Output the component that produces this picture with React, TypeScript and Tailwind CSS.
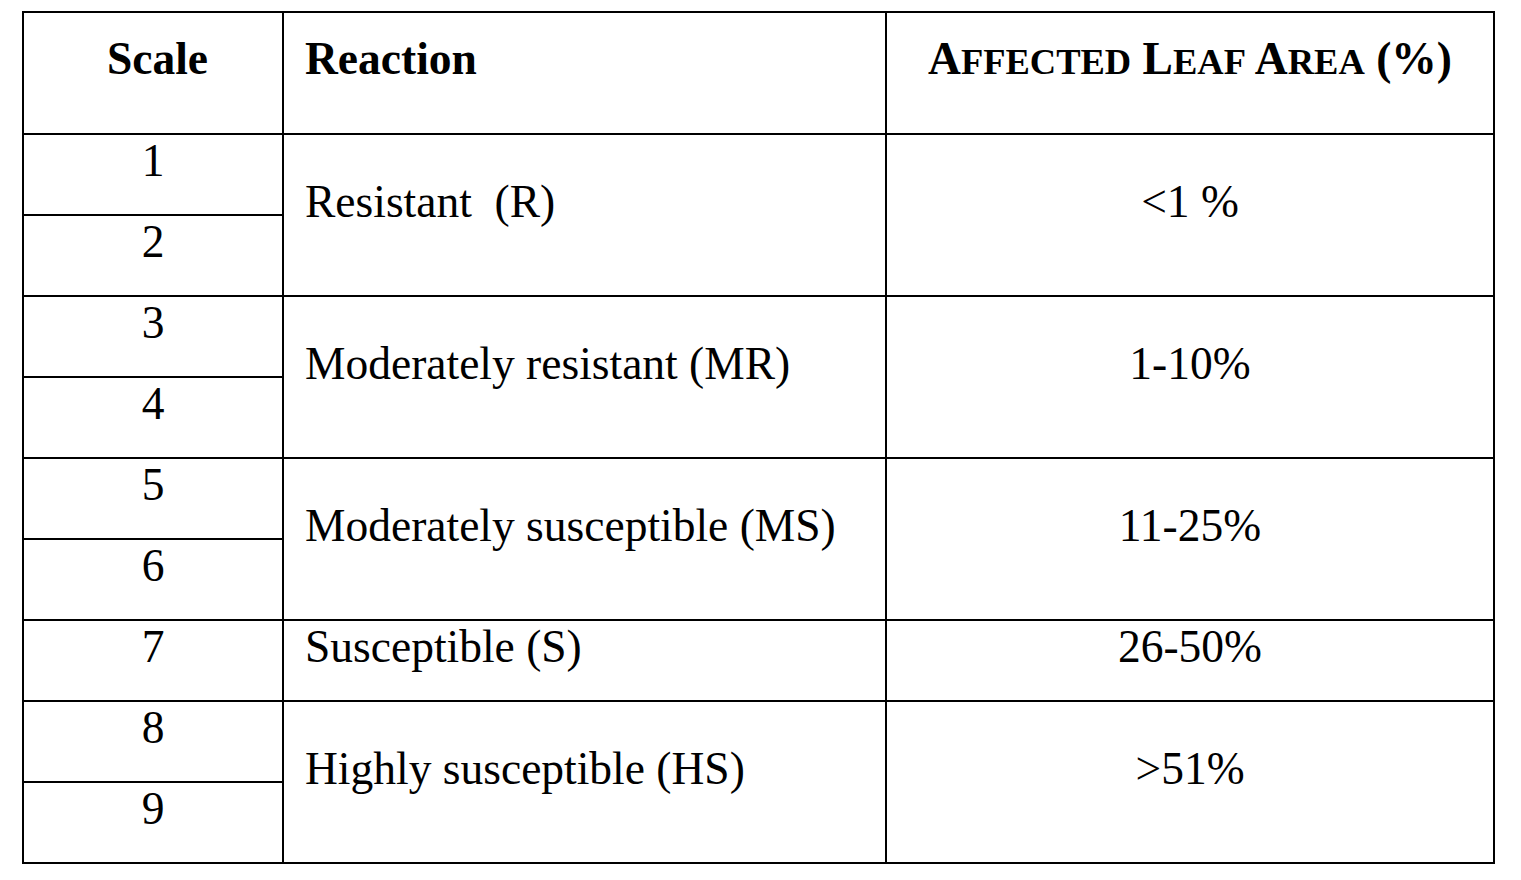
import React from "react";

const cell = "bg-white text-black";
const single = "pt-0";
const merged = "pt-[41px]";
const sc = "text-[36.5px]";

export default function App() {
  return (
    <div className="min-h-screen w-full bg-white pl-[22px] pt-[11px] font-['Liberation_Serif','Times_New_Roman',serif] text-[45.5px] leading-[52px] text-black">
      <div className="grid w-[1473px] grid-cols-[258px_601px_606px] grid-rows-[120px_repeat(9,79px)] gap-[2px] bg-black p-[2px]">
        {/* header */}
        <div className={`${cell} col-start-1 row-start-1 pt-[20px] pl-[9px] text-center font-bold`}>Scale</div>
        <div className={`${cell} col-start-2 row-start-1 pt-[20px] pl-[21px] font-bold`}>Reaction</div>
        <div className={`${cell} col-start-3 row-start-1 pt-[20px] text-center font-bold whitespace-nowrap`}>
          A<span className={sc}>FFECTED</span> L<span className={sc}>EAF</span> A<span className={sc}>REA</span> (%)
        </div>

        {/* scale column */}
        <div className={`${cell} ${single} col-start-1 row-start-2 text-center`}>1</div>
        <div className={`${cell} ${single} col-start-1 row-start-3 text-center`}>2</div>
        <div className={`${cell} ${single} col-start-1 row-start-4 text-center`}>3</div>
        <div className={`${cell} ${single} col-start-1 row-start-5 text-center`}>4</div>
        <div className={`${cell} ${single} col-start-1 row-start-6 text-center`}>5</div>
        <div className={`${cell} ${single} col-start-1 row-start-7 text-center`}>6</div>
        <div className={`${cell} ${single} col-start-1 row-start-8 text-center`}>7</div>
        <div className={`${cell} ${single} col-start-1 row-start-9 text-center`}>8</div>
        <div className={`${cell} ${single} col-start-1 row-start-10 text-center`}>9</div>

        {/* reaction column */}
        <div className={`${cell} ${merged} col-start-2 row-start-2 row-span-2 pl-[21px] whitespace-pre`}>Resistant  (R)</div>
        <div className={`${cell} ${merged} col-start-2 row-start-4 row-span-2 pl-[21px]`}>Moderately resistant (MR)</div>
        <div className={`${cell} ${merged} col-start-2 row-start-6 row-span-2 pl-[21px]`}>Moderately susceptible (MS)</div>
        <div className={`${cell} ${single} col-start-2 row-start-8 pl-[21px]`}>Susceptible (S)</div>
        <div className={`${cell} ${merged} col-start-2 row-start-9 row-span-2 pl-[21px]`}>Highly susceptible (HS)</div>

        {/* affected area column */}
        <div className={`${cell} ${merged} col-start-3 row-start-2 row-span-2 text-center`}>&lt;1 %</div>
        <div className={`${cell} ${merged} col-start-3 row-start-4 row-span-2 text-center`}>1-10%</div>
        <div className={`${cell} ${merged} col-start-3 row-start-6 row-span-2 text-center`}>11-25%</div>
        <div className={`${cell} ${single} col-start-3 row-start-8 text-center`}>26-50%</div>
        <div className={`${cell} ${merged} col-start-3 row-start-9 row-span-2 text-center`}>&gt;51%</div>
      </div>
    </div>
  );
}
